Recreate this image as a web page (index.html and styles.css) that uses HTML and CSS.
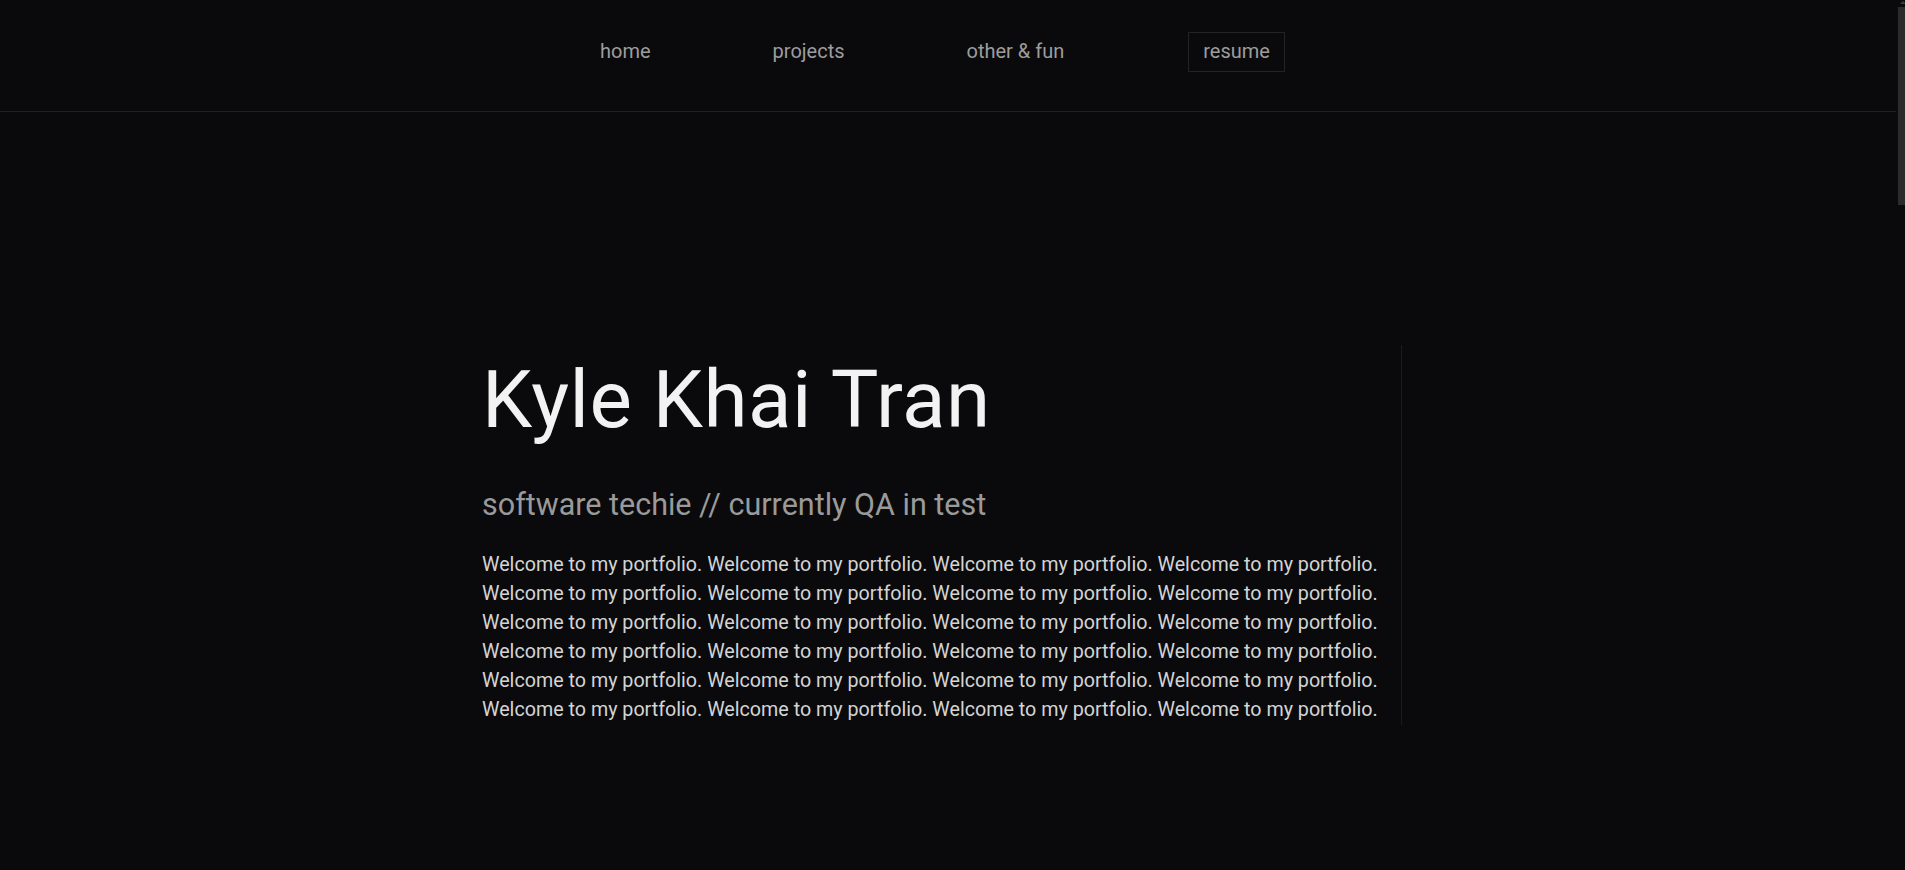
FILE: index.html
```html
<!DOCTYPE html>
<html lang="en">
<head>
<meta charset="utf-8">
<title>Kyle Khai Tran</title>
<link rel="stylesheet" href="styles.css">
</head>
<body>
<header class="site-header">
  <nav class="nav">
    <a class="nav-link" href="#">home</a>
    <a class="nav-link" href="#">projects</a>
    <a class="nav-link" href="#">other &amp; fun</a>
    <a class="nav-link nav-boxed" href="#">resume</a>
  </nav>
</header>
<main class="main">
  <section class="intro">
    <h1 class="title">Kyle Khai Tran</h1>
    <h2 class="subtitle">software techie // currently QA in test</h2>
    <p class="welcome">Welcome to my portfolio. Welcome to my portfolio. Welcome to my portfolio. Welcome to my portfolio. Welcome to my portfolio. Welcome to my portfolio. Welcome to my portfolio. Welcome to my portfolio. Welcome to my portfolio. Welcome to my portfolio. Welcome to my portfolio. Welcome to my portfolio. Welcome to my portfolio. Welcome to my portfolio. Welcome to my portfolio. Welcome to my portfolio. Welcome to my portfolio. Welcome to my portfolio. Welcome to my portfolio. Welcome to my portfolio. Welcome to my portfolio. Welcome to my portfolio. Welcome to my portfolio. Welcome to my portfolio.</p>
  </section>
</main>
<div class="fake-scrollbar" aria-hidden="true">
  <span class="scroll-arrow"></span>
  <span class="scroll-thumb"></span>
</div>
</body>
</html>
```
FILE: styles.css
```css
html {
  background: #0a0a0c;
}
body {
  margin: 0;
  background: #0a0a0c;
  color: #e6e6e6;
  font-family: Roboto, "Liberation Sans", sans-serif;
  min-height: 3800px;
  padding-right: 9px;
}
.site-header {
  box-sizing: border-box;
  height: 112px;
  padding-top: 32px;
  border-bottom: 1px solid #202023;
}
.nav {
  display: flex;
  align-items: flex-start;
  gap: 92px;
  padding-left: 585px;
}
.nav-link {
  color: #9d9d9d;
  text-decoration: none;
  font-size: 20px;
  padding: 8px 14px 10px;
  border: 1px solid transparent;
  line-height: 20px;
}
.nav-boxed {
  border-color: #232326;
  margin-left: 17px;
}
.main {
  display: flex;
  padding: 233px 0 0 482px;
}
.intro {
  width: 896px;
  padding-right: 23px;
  padding-bottom: 1px;
  border-right: 1px solid #1b1b1e;
}
.title {
  margin: 7px 0 0;
  font-size: 80px;
  font-weight: 400;
  line-height: 96px;
  color: #f2f2f2;
  letter-spacing: 0.5px;
}
.subtitle {
  margin: 39px 0 0;
  font-size: 30.5px;
  font-weight: 400;
  line-height: 36.6px;
  color: #9a9a9a;
}
.welcome {
  margin: 26px 0 0;
  font-size: 19.7px;
  line-height: 29px;
  color: #d4d4d4;
}
.fake-scrollbar {
  position: fixed;
  top: 0;
  right: 0;
  width: 9px;
  height: 100vh;
  background: #0a0a0c;
}
.scroll-arrow {
  position: absolute;
  top: 1px;
  left: 4px;
  width: 0;
  height: 0;
  border-left: 3px solid transparent;
  border-right: 3px solid transparent;
  border-bottom: 3px solid #3a3a3c;
}
.scroll-thumb {
  position: absolute;
  top: 7px;
  left: 2px;
  width: 7px;
  height: 198px;
  background: #2b2b2d;
}
```
